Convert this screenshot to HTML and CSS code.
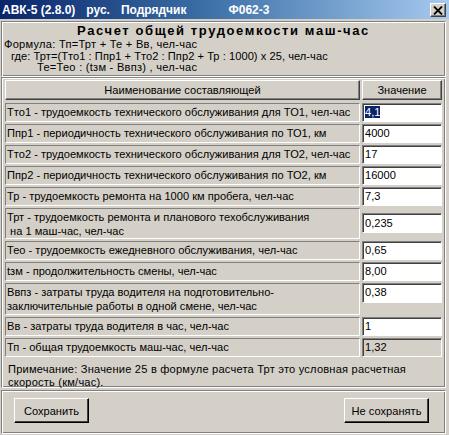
FILE: index.html
```html
<!DOCTYPE html>
<html lang="ru">
<head>
<meta charset="utf-8">
<link rel="stylesheet" href="styles.css">
</head>
<body>
<div class="window">
  <div class="titlebar">
    <div class="title-text">
      <span>АВК-5 (2.8.0)</span>
      <span>рус.</span>
      <span>Подрядчик</span>
      <span class="form-code">Ф062-3</span>
    </div>
    <div class="close-btn">
      <svg width="10" height="9" viewBox="0 0 10 9"><path d="M1 0.5 L9 8.5 M9 0.5 L1 8.5" stroke="#000" stroke-width="1.8"/></svg>
    </div>
  </div>
  <div class="body">
    <div class="panel top-panel">
      <div class="heading">Расчет общей трудоемкости маш-час</div>
      <div class="formula">Формула: Тп=Трт + Те + Вв, чел-час</div>
      <div class="formula f2">где: Трт=(Тто1 : Ппр1 + Тто2 : Ппр2 + Тр : 1000) х 25, чел-час</div>
      <div class="formula f3">Те=Тео : (tзм - Ввпз) , чел-час</div>
    </div>
    <div class="panel table-panel">
      <div class="row head">
        <div class="hcell">Наименование составляющей</div>
        <div class="hcell">Значение</div>
      </div>
      <div class="row">
        <div class="label">Тто1 - трудоемкость технического обслуживания для ТО1, чел-час</div>
        <div class="input"><span class="sel">4,1</span></div>
      </div>
      <div class="row">
        <div class="label">Ппр1 - периодичность технического обслуживания по ТО1, км</div>
        <div class="input">4000</div>
      </div>
      <div class="row">
        <div class="label">Тто2 - трудоемкость технического обслуживания для ТО2, чел-час</div>
        <div class="input">17</div>
      </div>
      <div class="row">
        <div class="label">Ппр2 - периодичность технического обслуживания по ТО2, км</div>
        <div class="input">16000</div>
      </div>
      <div class="row">
        <div class="label">Тр - трудоемкость ремонта на 1000 км пробега, чел-час</div>
        <div class="input">7,3</div>
      </div>
      <div class="row tall trt">
        <div class="label multi">Трт - трудоемкость ремонта и планового техобслуживания<br>&nbsp;на 1 маш-час, чел-час</div>
        <div class="input">0,235</div>
      </div>
      <div class="row">
        <div class="label">Тео - трудоемкость ежедневного обслуживания, чел-час</div>
        <div class="input">0,65</div>
      </div>
      <div class="row">
        <div class="label">tзм - продолжительность смены, чел-час</div>
        <div class="input">8,00</div>
      </div>
      <div class="row tall vvpz">
        <div class="label multi">Ввпз - затраты труда водителя на подготовительно-<br>заключительные работы в одной смене, чел-час</div>
        <div class="input">0,38</div>
      </div>
      <div class="row">
        <div class="label">Вв - затраты труда водителя в час, чел-час</div>
        <div class="input">1</div>
      </div>
      <div class="row">
        <div class="label">Тп - общая трудоемкость маш-час, чел-час</div>
        <div class="input readonly">1,32</div>
      </div>
      <div class="note">Примечание: Значение 25 в формуле расчета Трт это условная расчетная<br>скорость (км/час).</div>
    </div>
    <div class="panel button-panel">
      <div class="btn save">Сохранить</div>
      <div class="btn nosave">Не сохранять</div>
    </div>
  </div>
</div>
</body>
</html>
```
FILE: styles.css
```css
* { box-sizing: border-box; }
html, body {
  margin: 0;
  padding: 0;
  background: #d4d0c8;
}
body {
  font-family: "Liberation Sans", Arial, sans-serif;
  font-size: 11.1px;
  color: #000;
}
.window {
  width: 449px;
  height: 435px;
  background: #d4d0c8;
  overflow: hidden;
}
.titlebar {
  height: 19px;
  background: linear-gradient(to right, #0a246a 0%, #3a6ea5 45%, #a6caf0 100%);
  display: flex;
  align-items: center;
  justify-content: space-between;
  padding: 0 3px 0 2px;
}
.title-text {
  display: flex;
  gap: 11px;
  color: #fff;
  font-family: "Liberation Sans", Arial, sans-serif;
  font-weight: bold;
  font-size: 12px;
  white-space: nowrap;
}
.title-text .form-code { margin-left: 31px; }
.close-btn {
  width: 16px;
  height: 14px;
  background: #d4d0c8;
  border-top: 1px solid #fff;
  border-left: 1px solid #fff;
  border-right: 1px solid #404040;
  border-bottom: 1px solid #404040;
  box-shadow: inset -1px -1px 0 #808080;
  display: flex;
  align-items: center;
  justify-content: center;
  margin-top: 1px;
}
.body {
  padding: 2px 3px 0 1px;
  display: flex;
  flex-direction: column;
}
.panel {
  border-top: 1px solid #808080;
  border-left: 1px solid #808080;
  border-right: 1px solid #fff;
  border-bottom: 1px solid #fff;
  box-shadow: inset 1px 1px 0 #fff, inset -1px -1px 0 #808080;
}
.top-panel {
  height: 56px;
  padding: 2px 2px 0 2px;
  line-height: 11.5px;
}
.heading {
  text-align: center;
  font-weight: bold;
  font-size: 13px;
  letter-spacing: 1.6px;
  line-height: 14px;
  margin-bottom: 1px;
}
.formula { white-space: nowrap; letter-spacing: 0.25px; }
.f2 { padding-left: 7px; letter-spacing: 0.05px; }
.f3 { padding-left: 33px; }
.table-panel {
  height: 311px;
  padding: 2px 3px 0 3px;
}
.row {
  display: grid;
  grid-template-columns: 355px 80px;
  column-gap: 2px;
  height: 19px;
  margin-bottom: 2px;
}
.row.head {
  height: 20px;
  margin-bottom: 3px;
}
.hcell {
  border-top: 1px solid #fff;
  border-left: 1px solid #fff;
  border-right: 1px solid #404040;
  border-bottom: 1px solid #404040;
  box-shadow: inset -1px -1px 0 #808080;
  display: flex;
  align-items: center;
  justify-content: center;
  white-space: nowrap;
}
.label {
  border-top: 1px solid #808080;
  border-left: 1px solid #808080;
  border-right: 1px solid #fff;
  border-bottom: 1px solid #fff;
  padding-left: 1px;
  line-height: 17px;
  white-space: nowrap;
  overflow: hidden;
}
.label.multi {
  line-height: 13.5px;
  padding-top: 2px;
}
.row.trt { height: 31px; }
.row.vvpz { height: 32px; }
.input {
  background: #fff;
  border-top: 1px solid #808080;
  border-left: 1px solid #808080;
  border-right: 1px solid #fff;
  border-bottom: 1px solid #fff;
  box-shadow: inset 1px 1px 0 #404040;
  padding-left: 2px;
  line-height: 17px;
  height: 19px;
}
.trt .input { margin-top: 5px; height: 20px; line-height: 18px; }
.vvpz .input { height: 20px; line-height: 16px; }
.input.readonly { background: #d4d0c8; }
.sel {
  background: #0a246a;
  color: #fff;
}
.note {
  padding: 4px 0 0 3px;
  line-height: 13px;
  white-space: nowrap;
  letter-spacing: 0.2px;
}
.button-panel {
  margin-top: 2px;
  height: 44px;
  display: flex;
  justify-content: space-between;
  align-items: flex-start;
  padding: 7px 16px 0 12px;
}
.btn {
  height: 25px;
  display: flex;
  align-items: center;
  justify-content: center;
  background: #d4d0c8;
  border-top: 1px solid #fff;
  border-left: 1px solid #fff;
  border-right: 1px solid #000;
  border-bottom: 1px solid #000;
  box-shadow: inset -1px -1px 0 #404040;
}
.save { width: 75px; }
.nosave { width: 85px; }
```
